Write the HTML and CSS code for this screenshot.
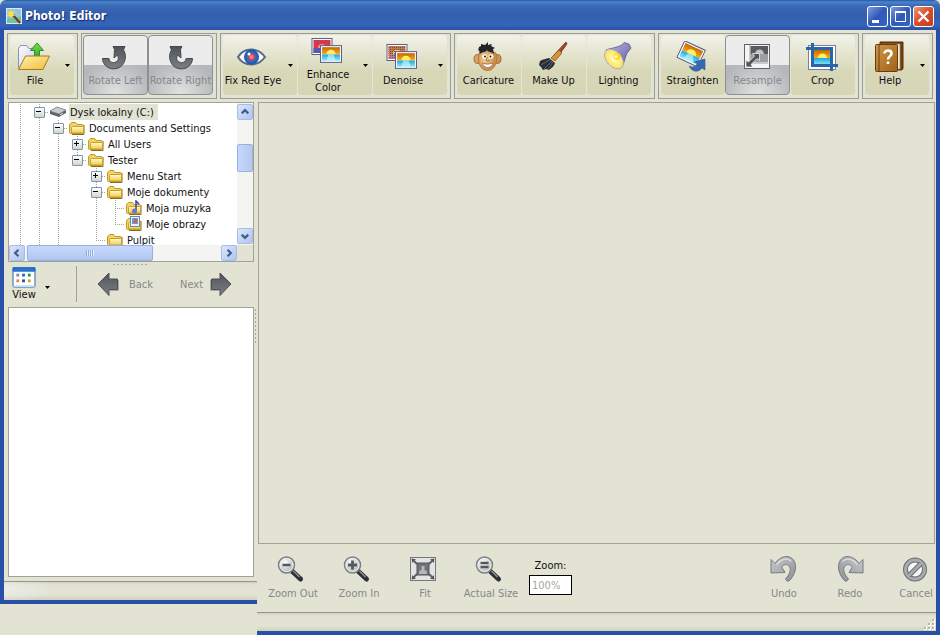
FILE: index.html
```html
<!DOCTYPE html>
<html lang="en">
<head>
<meta charset="utf-8">
<title>Photo! Editor</title>
<link rel="stylesheet" href="styles.css">
</head>
<body>
<svg class="defs" aria-hidden="true">
  <defs>
    <linearGradient id="gFolder" x1="0" y1="0" x2="0" y2="1"><stop offset="0" stop-color="#fffbd0"/><stop offset="1" stop-color="#f0cc50"/></linearGradient>
    <linearGradient id="gFolderBig" x1="0" y1="0" x2="1" y2="1"><stop offset="0" stop-color="#fff4b0"/><stop offset="1" stop-color="#eebc38"/></linearGradient>
    <linearGradient id="gPaper" x1="0" y1="0" x2="1" y2="1"><stop offset="0" stop-color="#fdfdff"/><stop offset="1" stop-color="#c4c8e0"/></linearGradient>
    <linearGradient id="gGreen" x1="0" y1="0" x2="0" y2="1"><stop offset="0" stop-color="#7ddc50"/><stop offset="1" stop-color="#38a830"/></linearGradient>
    <linearGradient id="gDark" x1="0" y1="0" x2="0" y2="1"><stop offset="0" stop-color="#505459"/><stop offset="1" stop-color="#7c8085"/></linearGradient>
    <linearGradient id="gSteel" x1="0" y1="0" x2="1" y2="1"><stop offset="0" stop-color="#c8cacd"/><stop offset="1" stop-color="#8c9095"/></linearGradient>
    <linearGradient id="gSky" x1="0" y1="0" x2="0" y2="1"><stop offset="0" stop-color="#c06a00"/><stop offset="1" stop-color="#ffa820"/></linearGradient>
    <linearGradient id="gSea" x1="0" y1="0" x2="0" y2="1"><stop offset="0" stop-color="#18a8e0"/><stop offset="1" stop-color="#90e8f8"/></linearGradient>
    <linearGradient id="gBook" x1="0" y1="0" x2="1" y2="1"><stop offset="0" stop-color="#d09848"/><stop offset="1" stop-color="#a06018"/></linearGradient>
    <linearGradient id="gLamp" x1="0" y1="0" x2="1" y2="1"><stop offset="0" stop-color="#c0bce8"/><stop offset="1" stop-color="#5c54a0"/></linearGradient>
    <radialGradient id="gIris"><stop offset="0" stop-color="#5098e8"/><stop offset="1" stop-color="#1850a8"/></radialGradient>
    <radialGradient id="gRed"><stop offset="0" stop-color="#ffb0b0"/><stop offset="1" stop-color="#e02030"/></radialGradient>
    <radialGradient id="gBeam"><stop offset="0" stop-color="#fffff0"/><stop offset=".5" stop-color="#fff080"/><stop offset="1" stop-color="#f6e070"/></radialGradient>
    <radialGradient id="gFace" cx=".4" cy=".4"><stop offset="0" stop-color="#fcd8a0"/><stop offset="1" stop-color="#cc9050"/></radialGradient>
    <radialGradient id="gLens" cx=".4" cy=".35"><stop offset="0" stop-color="#ffffff"/><stop offset="1" stop-color="#c0c3c4"/></radialGradient>
    <pattern id="pNoise" width="2" height="2" patternUnits="userSpaceOnUse"><rect width="1" height="1" fill="#3060a8"/></pattern>
    <symbol id="photo" viewBox="0 0 21 17">
      <rect x=".5" y=".5" width="20" height="16" fill="#fff" stroke="#5c6088"/>
      <rect x="2" y="2" width="17" height="7" fill="url(#gSky)"/>
      <path d="M6 9a4.500 4.500 0 0 1 9 0z" fill="#fff060"/>
      <rect x="2" y="9" width="17" height="6" fill="url(#gSea)"/>
      <path d="M8 9h5l2 6H6z" fill="#d8f8ff" opacity=".6"/>
    </symbol>
    <symbol id="folder" viewBox="0 0 18 16">
      <path d="M4 14.500h12V5" fill="none" stroke="#8a6a18"/>
      <path d="M1.500 12.500V4.500l2-2h4l1.500 2h5q1.500 0 1.500 1.500v6.500q0 1-1 1h-12q-1 0-1-1z" fill="#f0d468" stroke="#c49820"/>
      <path d="M3.500 13V7.500q0-1 1-1h10q1 0 1 1V13z" fill="url(#gFolder)" stroke="#c8a030"/>
    </symbol>
    <symbol id="lens" viewBox="0 0 32 32">
      <path d="M15.500 18.500l8 7.500" stroke="#2c3034" stroke-width="5" stroke-linecap="round"/>
      <path d="M16.500 18l6 6" stroke="#8c9094" stroke-width="1.500"/>
      <circle cx="9.500" cy="12" r="8" fill="url(#gLens)" stroke="#7c8084" stroke-width="1.500"/>
      <circle cx="9.500" cy="12" r="6.500" fill="none" stroke="#f0f0f0"/>
    </symbol>
    <symbol id="undo" viewBox="0 0 32 32">
      <path d="M3 6.500l4 4C12 3 21 1 25.500 7 30 13.500 26.500 23 21 28q-2 1-3.500-2C22 21 24 15.500 20.500 12.500c-2.500-2-6-.5-6.500 2L17 19.500l-14 .5z" fill="url(#gSteel)" stroke="#777b80"/>
      <path d="M8.500 12c4-6 11-8 15-3.500" fill="none" stroke="#dcdee0" stroke-width="1.200"/>
    </symbol>
    <symbol id="rotate" viewBox="0 0 32 32">
      <path d="M14 5.500h12l-1.500 3.500c3 4.500 2.500 11-1.500 15.500-4.500 4.500-12.500 4.500-16.500 0C4.500 22.500 3.500 20 3.500 17.500H10c.5 3.500 3 4.500 5.500 4 4-1 4.500-4.500 3-7.500l-3.500 3 .500-8.500z" fill="url(#gDark)" stroke="#45494e"/>
    </symbol>
    <symbol id="arrow" viewBox="0 0 22 24">
      <path d="M1 12L12 1v6h8.500v10.500H12v6z" fill="url(#gDark)" stroke="#4c5054"/>
      <path d="M13 18.500h8.500V8" fill="none" stroke="#a8aaa4"/>
    </symbol>
    <symbol id="drop" viewBox="0 0 5 3"><path d="M0 0h5L2.500 3z"/></symbol>
    <symbol id="chev" viewBox="0 0 15 15"><path d="M4 9l3.500-3.500L11 9" fill="none" stroke="#40608c" stroke-width="2.400"/></symbol>
  </defs>
</svg>

<div class="window">
  <header class="titlebar">
    <svg class="app-icon" viewBox="0 0 16 16"><rect x=".5" y=".5" width="15" height="15" fill="#8fc8e8" stroke="#d8e8f8"/><path d="M1 11c3-3 8 0 14-3v7H1z" fill="#78c0a0"/><path d="M7 7l7 8" stroke="#704010" stroke-width="2"/><path d="M5 1l1 3 3-1-2 3 2 2-3 0-1 3-1-3-3 0 2-2-2-3 3 1z" fill="#ffe040"/><path d="M11 2l1 2 2 0-2 2" fill="#f8a030"/></svg>
    <h1>Photo! Editor</h1>
    <div class="winbtns">
      <button class="winbtn" aria-label="Minimize"><svg viewBox="0 0 21 21"><rect x="5" y="14" width="7" height="3" fill="#fff"/></svg></button>
      <button class="winbtn" aria-label="Maximize"><svg viewBox="0 0 21 21"><path d="M5.500 5.500h10v10h-10z" fill="none" stroke="#fff"/><path d="M5 6h11" stroke="#fff" stroke-width="2"/></svg></button>
      <button class="winbtn close" aria-label="Close"><svg viewBox="0 0 21 21"><path d="M5.500 5.500l10 10M15.500 5.500l-10 10" stroke="#fff" stroke-width="2.400"/></svg></button>
    </div>
  </header>

  <nav class="toolbar">
    <div class="group">
      <button class="tool"><span class="face"><svg viewBox="0 0 32 32"><path d="M.5 27V7.500l2-3h6l2.500 3h7.500V27z" fill="url(#gPaper)" stroke="#8890b8"/><path d="M16.500 16V9.500h-4L19 2l6.500 7.500h-4V16z" fill="url(#gGreen)" stroke="#289028"/><path d="M.5 28.500L7.500 15h24L25 28.500z" fill="url(#gFolderBig)" stroke="#a87820"/></svg><span>File</span></span><svg class="drop"><use href="#drop"/></svg></button>
    </div>
    <div class="group">
      <button class="tool off" disabled><span class="face"><svg><use href="#rotate"/></svg><span>Rotate Left</span></span></button>
      <button class="tool off" disabled><span class="face"><svg class="flip"><use href="#rotate"/></svg><span>Rotate Right</span></span></button>
    </div>
    <div class="group">
      <button class="tool wide"><span class="face"><svg viewBox="0 0 32 32"><path d="M2 16C8 6 22 6 29 16 22 26 8 26 2 16z" fill="#f8fafc" stroke="#586888" stroke-width="2"/><circle cx="15.500" cy="16" r="7.500" fill="url(#gIris)"/><circle cx="15.500" cy="16" r="3.500" fill="url(#gRed)"/><circle cx="13" cy="13" r="1.500" fill="#fff"/></svg><span>Fix Red Eye</span></span><svg class="drop"><use href="#drop"/></svg></button>
      <button class="tool wide"><span class="face"><svg viewBox="0 0 32 32"><rect x="1" y="3.500" width="20" height="16" fill="#fff" stroke="#5c6088"/><rect x="2.500" y="5" width="17" height="13" fill="#d83848"/><path d="M7 13a4 4 0 0 1 8 0z" fill="#f890a0"/><path d="M2.500 13h17v5h-17z" fill="#5858b0"/><use href="#photo" x="9" y="10" width="22" height="18"/></svg><span>Enhance Color</span></span><svg class="drop"><use href="#drop"/></svg></button>
      <button class="tool wide"><span class="face"><svg viewBox="0 0 32 32"><rect x="1" y="3.500" width="20" height="16" fill="#fff" stroke="#5c6088"/><rect x="2.500" y="5" width="17" height="8" fill="#e07030"/><path d="M7 13a4 4 0 0 1 8 0z" fill="#ffe060"/><rect x="2.500" y="13" width="17" height="5" fill="#e07878"/><rect x="2.500" y="5" width="17" height="13" fill="url(#pNoise)"/><use href="#photo" x="9" y="10" width="22" height="18"/></svg><span>Denoise</span></span><svg class="drop"><use href="#drop"/></svg></button>
    </div>
    <div class="group">
      <button class="tool"><span class="face"><svg viewBox="0 0 32 32"><ellipse cx="5.500" cy="18" rx="3.500" ry="4.500" fill="#dca060" stroke="#906030" stroke-width=".8"/><ellipse cx="25.500" cy="18" rx="3.500" ry="4.500" fill="#cc9050" stroke="#906030" stroke-width=".8"/><path d="M7 12q8-5 17 0l.5 8q-2 9.500-9 9.500T6.500 20z" fill="url(#gFace)" stroke="#a87038" stroke-width=".8"/><path d="M8 13l-1-4-1 1 1-4 2-1 0-2 4 1 3-3 0 3 4-1-1 2 4 2-2 1 1 5c-3-3-5-1-7-4-2 3-4 1-7 4z" fill="#202428"/><circle cx="12.500" cy="15.500" r="2.300" fill="#fff"/><circle cx="19" cy="15.500" r="2.300" fill="#fff"/><circle cx="13" cy="15.500" r=".9"/><circle cx="18.500" cy="15.500" r=".9"/><path d="M15.500 16q-2.500 4 0 4t1.500-1" fill="none" stroke="#a06828"/><path d="M10.500 22.500q5.500 1.500 10.500-.5-1 4.500-5.500 4.500t-5-4z" fill="#fff" stroke="#a05838" stroke-width=".7"/></svg><span>Caricature</span></span></button>
      <button class="tool"><span class="face"><svg viewBox="0 0 32 32"><path d="M29 1L16 15l3 3L30 3z" fill="#a84830" stroke="#602010" stroke-width=".7"/><path d="M22 9l-8 8 4 3 7-8z" fill="#d89040" stroke="#805010" stroke-width=".7"/><path d="M12 17l6 5c-1 4-4 5-6 7l-3-1-3 1-2-3-2-2 1-4c3-2 6-2 9-3z" fill="#2a3036"/><path d="M4 24l10-6M7 28l8-8M11 28l5-7" stroke="#70787c" stroke-width=".7"/></svg><span>Make Up</span></span></button>
      <button class="tool"><span class="face"><svg viewBox="0 0 32 32"><path d="M4 9C9 7 14 7 20 4l2-2.500 5 1.500 2 4-3 4c-3 3-3 11-7 16z" fill="url(#gLamp)" stroke="#5c5898" stroke-width=".8"/><ellipse cx="12" cy="18" rx="11.500" ry="7.500" transform="rotate(48 12 18)" fill="url(#gBeam)" stroke="#a8a0b0" stroke-width=".8"/><circle cx="15" cy="15.500" r="3.500" fill="#ffd820"/><circle cx="14" cy="15.500" r="1.500" fill="#fff"/></svg><span>Lighting</span></span></button>
    </div>
    <div class="group">
      <button class="tool"><span class="face"><svg viewBox="0 0 32 32"><g transform="rotate(25 16 11)"><use href="#photo" x="4" y="3" width="24" height="20"/></g><path d="M13 25c3 2 8 1 8-3l-3-1 11-3v11l-3-2c-4 5-10 4-13-2z" fill="#3868b0" stroke="#2c5898" stroke-width=".6"/></svg><span>Straighten</span></span></button>
      <button class="tool off" disabled><span class="face"><svg viewBox="0 0 32 32"><rect x="3.500" y="3.500" width="25" height="24" fill="#f4f4f4" stroke="#606468"/><rect x="9.500" y="5" width="17.500" height="16" fill="#9c9ea0"/><rect x="9.500" y="5" width="17.500" height="8" fill="#585c60"/><path d="M14 13a4.500 4.500 0 0 1 9 0z" fill="#c0c2c4"/><path d="M9 4v18h18" fill="none" stroke="#a0a2a4"/><path d="M5 26v-7l2.500 2 6-6-2-2.500h7v7l-2.500-2-6 6 2 2.500z" fill="#505458" stroke="#f0f0f0" stroke-width=".8"/></svg><span>Resample</span></span></button>
      <button class="tool"><span class="face"><svg viewBox="0 0 32 32"><rect x="2.500" y="4.500" width="27" height="24" fill="#fff" stroke="#7880a0"/><rect x="8" y="9" width="17" height="8" fill="url(#gSky)"/><path d="M12 17a4.500 4.500 0 0 1 9 0z" fill="#fff060"/><rect x="8" y="17" width="17" height="7" fill="url(#gSea)"/><path d="M6.500 2v22.500H32M0 7.500h25.500V30" fill="none" stroke="#2c64a8" stroke-width="3"/></svg><span>Crop</span></span></button>
    </div>
    <div class="group">
      <button class="tool"><span class="face"><svg viewBox="0 0 32 32"><path d="M7 1h23v26q0 2-2 2H7z" fill="#704010" stroke="#583008"/><path d="M8 3h19v25H8z" fill="#f4ecd8" stroke="#a88860" stroke-width=".7"/><rect x="2.500" y="3.500" width="22" height="27" rx="1" fill="url(#gBook)" stroke="#683c10"/><path d="M6 4v26" stroke="#704010"/><path d="M11.500 12.500c0-4 7-4 7 0 0 3-3.500 2.500-3.500 6M15 20.500v2.500" fill="none" stroke="#fff" stroke-width="2.600"/></svg><span>Help</span></span><svg class="drop"><use href="#drop"/></svg></button>
    </div>
  </nav>

  <div class="main">
    <aside class="side">
      <div class="side-body">
        <section class="tree-panel" aria-label="Folders">
          <ul class="tree">
            <li><i class="g v"></i><button class="g v box" aria-label="Collapse"></button><svg class="ico" viewBox="0 0 18 16"><path d="M1 7l7-4 9 3v3l-7 4-9-3z" fill="#606468"/><path d="M1 7l7-4 9 3-7 4z" fill="#c8ccd0" stroke="#707478" stroke-width=".6"/><path d="M11 11l3-2" stroke="#e8f0e8"/></svg><span class="sel">Dysk lokalny (C:)</span></li>
            <li><i class="g v"></i><i class="g v"></i><button class="g v box" aria-label="Collapse"></button><svg class="ico"><use href="#folder"/></svg><span>Documents and Settings</span></li>
            <li><i class="g v"></i><i class="g v"></i><i class="g v"></i><button class="g v box plus" aria-label="Expand"></button><svg class="ico"><use href="#folder"/></svg><span>All Users</span></li>
            <li><i class="g v"></i><i class="g v"></i><i class="g v"></i><button class="g end box" aria-label="Collapse"></button><svg class="ico"><use href="#folder"/></svg><span>Tester</span></li>
            <li><i class="g v"></i><i class="g v"></i><i class="g v"></i><i class="g"></i><button class="g v box plus" aria-label="Expand"></button><svg class="ico"><use href="#folder"/></svg><span>Menu Start</span></li>
            <li><i class="g v"></i><i class="g v"></i><i class="g v"></i><i class="g"></i><button class="g v box" aria-label="Collapse"></button><svg class="ico"><use href="#folder"/></svg><span>Moje dokumenty</span></li>
            <li><i class="g v"></i><i class="g v"></i><i class="g v"></i><i class="g"></i><i class="g v"></i><i class="g v h"></i><svg class="ico" viewBox="0 0 18 16"><use href="#folder" width="18" height="16"/><path d="M11 11V1l3 3" fill="none" stroke="#3848a8" stroke-width="1.500"/><circle cx="9.500" cy="11" r="2.500" fill="#6878d0"/></svg><span>Moja muzyka</span></li>
            <li><i class="g v"></i><i class="g v"></i><i class="g v"></i><i class="g"></i><i class="g v"></i><i class="g end h"></i><svg class="ico" viewBox="0 0 18 16"><use href="#folder" width="18" height="16"/><rect x="5.500" y=".5" width="9" height="10" fill="#e8f4ff" stroke="#6888a8"/><rect x="7" y="2" width="6" height="6" fill="#58a0e0"/><rect x="9" y="3" width="3" height="4" fill="#e85838"/></svg><span>Moje obrazy</span></li>
            <li><i class="g v"></i><i class="g v"></i><i class="g v"></i><i class="g"></i><i class="g end h"></i><svg class="ico"><use href="#folder"/></svg><span>Pulpit</span></li>
          </ul>
          <div class="vbar">
            <button class="sb" aria-label="Scroll up"><svg><use href="#chev"/></svg></button>
            <div class="track"><div class="thumb"></div></div>
            <button class="sb down" aria-label="Scroll down"><svg><use href="#chev"/></svg></button>
          </div>
          <div class="hbar">
            <button class="sb left" aria-label="Scroll left"><svg><use href="#chev"/></svg></button>
            <div class="track"><div class="thumb"><i class="grip"></i></div></div>
            <button class="sb right" aria-label="Scroll right"><svg><use href="#chev"/></svg></button>
          </div>
        </section>
        <div class="hsplit"></div>
        <div class="nav">
          <button class="view"><span class="view-face"><svg viewBox="0 0 24 22"><rect x=".5" y="1" width="23" height="20" rx="1" fill="#fff" stroke="#2060b0"/><rect x="0" y="0" width="24" height="5" rx="1" fill="#2870c8"/><path d="M4 7h3v3H4z" fill="#9080c0"/><path d="M10 7h3v3h-3z" fill="#2868c0"/><path d="M16 7h3v3h-3z" fill="#10a050"/><path d="M4 13h3v3H4z" fill="#f08050"/><path d="M10 13h3v3h-3z" fill="#1850a8"/><path d="M16 13h3v3h-3z" fill="#d0a818"/><path d="M1 19h22v2H1z" fill="#c0e0f8"/></svg><span>View</span></span><svg class="drop"><use href="#drop"/></svg></button>
          <button class="step back" disabled><svg><use href="#arrow"/></svg><span>Back</span></button>
          <button class="step" disabled><span>Next</span><svg class="flip"><use href="#arrow"/></svg></button>
        </div>
        <section class="thumbs" aria-label="Thumbnails"></section>
        <div class="status"></div>
      </div>
    </aside>

    <main class="work">
      <div class="stage">
        <div class="vsplit"></div>
        <section class="canvas" aria-label="Canvas"></section>
      </div>
      <div class="bottom">
        <button class="act" disabled><svg viewBox="0 0 32 32"><use href="#lens"/><path d="M5.500 12h8" stroke="#54585c" stroke-width="2.500"/></svg><span>Zoom Out</span></button>
        <button class="act" disabled><svg viewBox="0 0 32 32"><use href="#lens"/><path d="M5 12h9M9.500 7.500v9" stroke="#54585c" stroke-width="2.800"/></svg><span>Zoom In</span></button>
        <button class="act" disabled><svg viewBox="0 0 32 32"><rect x="1.500" y="4.500" width="25" height="23" fill="#e4e4e2" stroke="#74787c"/><path d="M3 6l5 5M25 6l-5 5M3 26l5-5M25 26l-5-5" stroke="#606468" stroke-width="2"/><path d="M3 6h4L3 10zM25 6h-4l4 4zM3 26h4l-4-4zM25 26h-4l4-4z" fill="#54585c"/><rect x="8" y="10" width="12" height="12" fill="#707478" stroke="#50545a"/><path d="M10 21q0-4 2.500-4v-4h3v4q2.500 0 2.500 4z" fill="#b4b6b8"/></svg><span>Fit</span></button>
        <button class="act" disabled><svg viewBox="0 0 32 32"><use href="#lens"/><path d="M5.500 10h8M5.500 14h8" stroke="#54585c" stroke-width="2.500"/></svg><span>Actual Size</span></button>
        <div class="zoom"><label for="zoom">Zoom:</label><input id="zoom" type="text" value="100%" disabled></div>
        <div class="history">
          <button class="act small" disabled><svg><use href="#undo"/></svg><span>Undo</span></button>
          <button class="act small" disabled><svg class="flip"><use href="#undo"/></svg><span>Redo</span></button>
          <button class="act small" disabled><svg viewBox="0 0 32 32"><circle cx="15" cy="16.500" r="9.500" fill="#f8f8f4" stroke="#686c70" stroke-width="5"/><circle cx="15" cy="16.500" r="9.500" fill="none" stroke="#a8abae" stroke-width="3"/><path d="M9 22.500l12-12" stroke="#686c70" stroke-width="5"/><path d="M8.500 23l13-13" stroke="#a8abae" stroke-width="3"/></svg><span>Cancel</span></button>
        </div>
      </div>
      <div class="status"><svg class="grip-corner" viewBox="0 0 12 12"><path d="M8 0h3v3H8zM4 4h3v3H4zM8 4h3v3H8zM0 8h3v3H0zM4 8h3v3H4zM8 8h3v3H8z" fill="#fff"/><path d="M8 0h2v2H8zM4 4h2v2H4zM8 4h2v2H8zM0 8h2v2H0zM4 8h2v2H4zM8 8h2v2H8z" fill="#b4b5a4"/></svg></div>
    </main>
  </div>
</div>
</body>
</html>
```

FILE: styles.css
```css
* { box-sizing: border-box; }

:root {
  --face: #e2e3d3;
  --line: #a0a296;
  --frame: #2850a8;
  --muted: #85888a;
}

body {
  margin: 0;
  background: var(--face);
  font-family: "DejaVu Sans Condensed", "DejaVu Sans", sans-serif;
  font-size: 11px;
  line-height: 13px;
  color: #101010;
}

.defs { position: absolute; width: 0; height: 0; }

button {
  font: inherit;
  color: inherit;
  border: 0;
  padding: 0;
  margin: 0;
  background: none;
}

button:disabled { color: var(--muted); }
svg { display: block; flex: none; }
.flip { transform: scaleX(-1); }

.window {
  display: flex;
  flex-direction: column;
  min-height: 100vh;
}

/* Title bar */
.titlebar {
  display: flex;
  align-items: center;
  height: 30px;
  padding: 2px 6px 0 6px;
  gap: 3px;
  border-radius: 6px 6px 0 0;
  background: linear-gradient(#2a5598 0, #4a86d0 2px, #3c6cb8 5px, #345eac 14px, #3565b8 25px, #2850a8 30px);
}
.app-icon { width: 16px; height: 16px; }
.titlebar h1 {
  flex: 1;
  margin: 0;
  font: bold 12px/18px "DejaVu Sans Condensed", "DejaVu Sans", sans-serif;
  color: #fff;
  text-shadow: 1px 1px 1px #10286c;
}
.winbtns { display: flex; gap: 2px; }
.winbtn {
  width: 21px;
  height: 21px;
  border: 1px solid #fff;
  border-radius: 3px;
  background: linear-gradient(135deg, #7c9ce0, #3058b8 50%, #3468c8);
}
.winbtn svg { width: 21px; height: 21px; margin: -1px; }
.winbtn.close { background: linear-gradient(135deg, #f09878, #d84c28 50%, #c83c18); }

/* Toolbar */
.toolbar {
  display: flex;
  gap: 3px;
  padding: 3px;
  border: solid var(--frame);
  border-width: 0 4px;
}
.group {
  display: flex;
  padding: 1px 3px 3px 1px;
  border: 1px solid #9a9c98;
}
.group:last-child { margin-right: auto; }
.tool {
  display: flex;
  align-items: center;
  width: 65px;
  height: 60px;
  border-radius: 4px;
  background: linear-gradient(#f2f2ea, #d8d8b8 60%, #d6d6b6);
  box-shadow: inset 1px 0 #e6e6d4;
}
.tool.wide { width: 75px; }
.tool.off {
  border: 1px solid #8c9094;
  background:
    radial-gradient(ellipse 36px 34px at 50% 100%, #e0e2e2, transparent) 0 100% / 100% 50% no-repeat,
    linear-gradient(#ececec 50%, #b4b8ba 50%);
  box-shadow: none;
}
.face {
  flex: 1;
  display: flex;
  flex-direction: column;
  align-items: center;
  min-width: 0;
  padding-bottom: 2px;
}
.face svg { width: 32px; height: 32px; margin: 0 2px 1px 0; }
.tool:not(.wide) .face span { white-space: nowrap; }
.drop { width: 13px; height: 3px; margin-top: 1px; }

/* Two columns below the toolbar */
.main { flex: 1; display: flex; }
.side {
  flex: none;
  width: 257px;
  padding-bottom: 31px;
}
.side-body {
  display: flex;
  flex-direction: column;
  height: 100%;
  border: solid var(--frame);
  border-width: 0 0 4px 4px;
}

/* Folder tree */
.tree-panel {
  display: grid;
  grid-template: 142px 16px / 1fr 16px;
  margin: 0 3px 0 4px;
  border: 1px solid var(--line);
  background: var(--face);
}
.tree {
  margin: 0;
  padding: 1px 0 0 2px;
  list-style: none;
  overflow: hidden;
  background: #fff;
}
.tree li { display: flex; align-items: center; height: 16px; white-space: nowrap; }
.tree span { padding: 2px 4px 1px 1px; margin-left: 2px; }
.tree .sel { background: #e2e3d3; }
.ico { width: 18px; height: 16px; }
.g { flex: none; width: 19px; height: 16px; }
.v, .end, .h {
  --v: repeating-linear-gradient(#a8a898 0 1px, transparent 1px 2px);
  --h: repeating-linear-gradient(90deg, #a8a898 0 1px, transparent 1px 2px);
}
.v { background: var(--v) 9px 0 / 1px 16px no-repeat; }
.v.h, .v.box { background: var(--v) 9px 0 / 1px 16px no-repeat, var(--h) 9px 8px / 10px 1px no-repeat; }
.end { background: var(--v) 9px 0 / 1px 8px no-repeat, var(--h) 9px 8px / 10px 1px no-repeat; }
.box { display: flex; align-items: center; justify-content: center; }
.box::before {
  content: "";
  width: 9px;
  height: 9px;
  border: 1px solid #7898b5;
  border-radius: 1px;
  background:
    linear-gradient(#000, #000) 1px 3px / 5px 1px no-repeat,
    linear-gradient(#fff, #d8d4c8);
}
.box.plus::before {
  background:
    linear-gradient(#000, #000) 1px 3px / 5px 1px no-repeat,
    linear-gradient(#000, #000) 3px 1px / 1px 5px no-repeat,
    linear-gradient(#fff, #d8d4c8);
}

/* Scroll bars */
.vbar, .hbar { display: flex; background: #f4f4f0; }
.vbar { flex-direction: column; padding: 1px 0; }
.sb {
  flex: none;
  width: 16px;
  height: 16px;
  border: 1px solid #a8bce8;
  border-radius: 2px;
  background: linear-gradient(135deg, #dce6fc, #b0c4f0);
}
.sb svg { width: 14px; height: 14px; }
.down svg { transform: rotate(180deg); }
.left svg { transform: rotate(-90deg); }
.right svg { transform: rotate(90deg); }
.track { flex: 1; display: flex; }
.thumb { border: 1px solid #98b0e0; border-radius: 2px; background: #bccef4; }
.vbar .track { flex-direction: column; padding-top: 24px; }
.vbar .thumb { width: 16px; height: 28px; background: linear-gradient(90deg, #c8d8fc, #b4c8f0); }
.hbar .track { padding-left: 2px; }
.hbar .thumb {
  display: flex;
  align-items: center;
  justify-content: center;
  width: 65%;
  background: linear-gradient(#c8d8fc, #b0c6f0);
}
.grip { width: 8px; height: 6px; background: repeating-linear-gradient(90deg, #8ca8e0 0 1px, #e4ecff 1px 2px); }

.hsplit {
  width: 35px;
  height: 1px;
  margin: 2px auto 0;
  background: repeating-linear-gradient(90deg, #a8a998 0 2px, transparent 2px 4px);
}

/* View / Back / Next */
.nav {
  display: flex;
  align-items: center;
  height: 38px;
  margin: 0 3px 4px 8px;
}
.view {
  display: flex;
  align-items: center;
  width: 65px;
  height: 36px;
  border-right: 1px solid var(--line);
}
.view-face { display: flex; flex-direction: column; align-items: center; margin-right: 5px; padding-bottom: 1px; }
.view-face svg { width: 24px; height: 21px; }
.view .drop { margin-top: 6px; }
.step { display: flex; align-items: center; gap: 10px; }
.step svg { width: 22px; height: 24px; }
.back { margin: 0 27px 0 20px; }
.step + .step { gap: 7px; }

.thumbs {
  flex: 1;
  margin: 0 3px 0 4px;
  border: 1px solid var(--line);
  background: #fff;
}

.status {
  height: 19px;
  margin-top: 4px;
  border-top: 1px solid #94968a;
  background: linear-gradient(#d0d1c2, #e2e3d3 3px, #e2e3d3 13px, #d0d0bc);
}
.side .status {
  background:
    radial-gradient(ellipse 50px 14px at 0 40%, #ececea, transparent),
    linear-gradient(#d0d1c2, #e2e3d3 3px, #e2e3d3 13px, #d0d0bc);
}

/* Work area */
.work {
  flex: 1;
  display: flex;
  flex-direction: column;
  min-width: 0;
  border: solid var(--frame);
  border-width: 0 4px 4px 0;
}
.stage { flex: 1; display: flex; position: relative; }
.vsplit {
  position: absolute;
  left: -2px;
  top: 50%;
  width: 1px;
  height: 36px;
  margin-top: -14px;
  background: repeating-linear-gradient(#a8a998 0 2px, transparent 2px 4px);
}
.canvas { flex: 1; margin: 0 1px; border: 1px solid var(--line); }

.bottom { display: flex; align-items: flex-start; height: 64px; padding: 9px 0 0 3px; }
.act {
  display: flex;
  flex-direction: column;
  align-items: center;
  width: 66px;
  white-space: nowrap;
}
.act svg { width: 32px; height: 32px; margin-bottom: 2px; }
.act.small { width: 40px; }
.zoom {
  display: flex;
  flex-direction: column;
  align-items: center;
  gap: 3px;
  margin: 6px 0 0 5px;
}
.zoom input {
  width: 43px;
  height: 20px;
  padding: 0 2px;
  border: 1px solid #000;
  background: #fff;
  font: inherit;
  color: #a8a898;
}
.history { display: flex; gap: 26px; margin-left: auto; }
.work .status { display: flex; justify-content: flex-end; align-items: flex-end; }
.grip-corner { width: 12px; height: 12px; }
```
